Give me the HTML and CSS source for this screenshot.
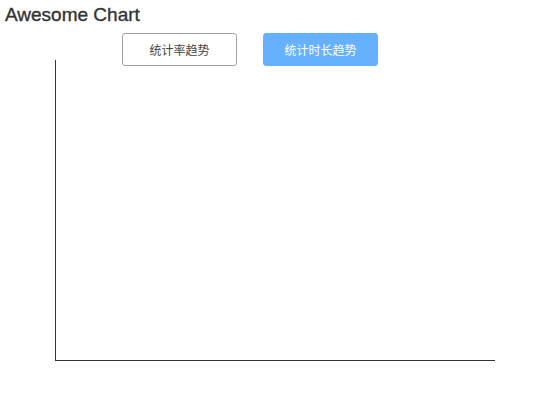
FILE: index.html
```html
<!DOCTYPE html>
<html>
<head>
<meta charset="utf-8">
<link rel="stylesheet" href="styles.css">
</head>
<body>
<h1 class="title">Awesome Chart</h1>
<div class="chart">
  <div class="tabs">
    <button class="tab">统计率趋势</button>
    <button class="tab tab-active">统计时长趋势</button>
  </div>
  <div class="plot"></div>
</div>
</body>
</html>
```
FILE: styles.css
```css
html, body {
  margin: 0;
  padding: 0;
  background: #fff;
}
body {
  font-family: "Liberation Sans", "Noto Sans CJK SC", sans-serif;
  color: #333;
}
.title {
  margin: 0;
  padding: 4px 0 0 5px;
  font-size: 19px;
  font-weight: normal;
  line-height: 21px;
  color: #333;
  -webkit-text-stroke: 0.35px #333;
}
.chart {
  position: relative;
  display: flow-root;
  width: 500px;
  height: 370px;
}
.tabs {
  position: absolute;
  top: 8px;
  left: 0;
  right: 0;
  display: flex;
  justify-content: center;
  gap: 26px;
}
.tab {
  box-sizing: border-box;
  width: 115px;
  height: 33px;
  border: 1px solid #a3a3a3;
  border-radius: 3px;
  background: #fff;
  color: #444;
  font-family: "Noto Sans CJK SC", sans-serif;
  font-size: 12px;
  padding: 0;
}
.tab-active {
  background: #66b1ff;
  border-color: #66b1ff;
  color: #fff;
}
.plot {
  box-sizing: border-box;
  margin: 35px 0 0 55px;
  width: 440px;
  height: 301px;
  border-left: 1px solid #333;
  border-bottom: 1px solid #333;
}
```
